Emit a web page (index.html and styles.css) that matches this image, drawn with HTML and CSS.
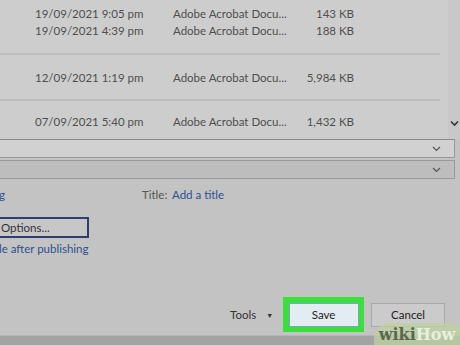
FILE: index.html
```html
<!DOCTYPE html>
<html lang="en">
  <head>
    <meta charset="UTF-8" />
    <title>Save As</title>
    <link rel="stylesheet" href="styles.css">
  </head>
  <body>
    <div class="dialog">
      <div class="list">
        <div class="files">
          <div class="group first">
            <div class="row"><span class="date">19/09/2021 9:05 pm</span><span class="type">Adobe Acrobat Docu...</span><span class="size">143 KB</span></div>
            <div class="row"><span class="date">19/09/2021 4:39 pm</span><span class="type">Adobe Acrobat Docu...</span><span class="size">188 KB</span></div>
          </div>
          <div class="group">
            <div class="row"><span class="date">12/09/2021 1:19 pm</span><span class="type">Adobe Acrobat Docu...</span><span class="size">5,984 KB</span></div>
          </div>
          <div class="group last">
            <div class="row"><span class="date">07/09/2021 5:40 pm</span><span class="type">Adobe Acrobat Docu...</span><span class="size">1,432 KB</span></div>
          </div>
        </div>
        <div class="scrollbar">
          <svg width="9" height="7" viewBox="0 0 9 7"><path d="M1 1.5 L4.5 5 L8 1.5" fill="none" stroke="#333" stroke-width="1.6"/></svg>
        </div>
      </div>

      <div class="select light">
        <svg width="9" height="6" viewBox="0 0 9 6"><path d="M1 1 L4.5 4.5 L8 1" fill="none" stroke="#555" stroke-width="1.2"/></svg>
      </div>
      <div class="select dark">
        <svg width="9" height="6" viewBox="0 0 9 6"><path d="M1 1 L4.5 4.5 L8 1" fill="none" stroke="#555" stroke-width="1.2"/></svg>
      </div>

      <div class="meta">
        <div class="meta-row">
          <span class="link cut">g</span>
          <span class="label">Title:</span>
          <span class="link">Add a title</span>
        </div>
        <button class="options">Options...</button>
        <span class="link cut after">le after publishing</span>
      </div>

      <div class="actions">
        <span class="tools">Tools</span>
        <span class="caret">&#9660;</span>
        <div class="highlight"><button class="btn save">Save</button></div>
        <button class="btn cancel">Cancel</button>
      </div>
      <div class="taskbar"></div>
      <div class="watermark"><span class="wiki">wiki</span><span class="how">How</span></div>
    </div>
  </body>
</html>
```

FILE: styles.css
```css
body {
  margin: 0;
  width: 460px;
  height: 345px;
  overflow: hidden;
  font-family: "Lato", "Noto Sans", sans-serif;
  font-size: 11.5px;
  color: #4f4f4f;
  background: #c3c3c3;
}

.dialog {
  position: relative;
  height: 345px;
  display: flex;
  flex-direction: column;
}

.list {
  display: flex;
  height: 139px;
  background: #cdcdcd;
  overflow: hidden;
}

.files {
  width: 448px;
}

.group {
  height: 46px;
  box-sizing: border-box;
  border-bottom: 2px solid #bdbdbd;
  width: 440px;
  display: flex;
  flex-direction: column;
  justify-content: center;
}

.group.first {
  height: 55px;
  justify-content: flex-start;
  padding-top: 5px;
}

.group.last {
  border-bottom: none;
  height: 38px;
  justify-content: flex-start;
  padding-top: 12px;
}

.row {
  display: flex;
  height: 17px;
  align-items: center;
}

.date {
  margin-left: 35px;
  width: 138px;
}

.type {
  width: 120px;
}

.size {
  width: 61px;
  text-align: right;
}

.scrollbar {
  width: 12px;
  background: #c8c8c8;
  display: flex;
  align-items: flex-end;
  justify-content: center;
  padding-bottom: 12px;
  box-sizing: border-box;
}

.select {
  width: 455px;
  height: 19px;
  box-sizing: border-box;
  border: 1px solid #9a9a9a;
  border-left: none;
  display: flex;
  align-items: center;
  justify-content: flex-end;
  padding-right: 13px;
}

.select.light {
  background: #d1d1d1;
  border-top-color: #8a8a8a;
}

.select.dark {
  margin-top: 2px;
  background: #bdbdbd;
}

.meta {
  padding-top: 6px;
  display: flex;
  flex-direction: column;
  align-items: flex-start;
}

.meta-row {
  display: flex;
  height: 18px;
  align-items: center;
  width: 100%;
}

.link {
  color: #2f4f8f;
}

.cut {
  margin-left: -1px;
}

.label {
  margin-left: 137px;
  width: 30px;
  color: #555;
}

.options {
  margin-top: 14px;
  margin-left: -8px;
  width: 97px;
  height: 21px;
  box-sizing: border-box;
  border: 2px solid #2d3f6e;
  background: #c7c7c7;
  font: inherit;
  color: #333;
  text-align: left;
  padding: 0 0 0 7px;
}

.after {
  margin-top: 4px;
}

.actions {
  margin-top: auto;
  display: flex;
  align-items: center;
  height: 35px;
  margin-bottom: 3px;
}

.tools {
  margin-left: 230px;
  color: #333;
}

.caret {
  margin-left: 10px;
  font-size: 7px;
  color: #333;
}

.highlight {
  margin-left: 10px;
  width: 81px;
  height: 35px;
  box-sizing: border-box;
  background: #3ae03a;
  display: flex;
  align-items: center;
  justify-content: center;
}

.btn {
  font: inherit;
  color: #222;
  height: 24px;
  box-sizing: border-box;
  border: 1px solid #9e9e9e;
  padding: 0;
}

.save {
  width: 70px;
  background: #e3ecf3;
  border-color: #7fa2c8;
}

.cancel {
  margin-left: 7px;
  width: 74px;
  background: #cbcbcb;
  border-color: #a9a9a9;
}

.taskbar {
  height: 10px;
  box-sizing: border-box;
  background: #a3a3a3;
  border-top: 1px solid #b5b5b5;
}

.watermark {
  position: absolute;
  right: 0;
  bottom: 0;
  width: 86px;
  padding: 2px 0 1px 0;
  text-align: center;
  border-radius: 16px 0 0 0;
  background: rgba(190, 210, 160, 0.75);
  font-family: "DejaVu Serif", serif;
  font-weight: bold;
  font-size: 16px;
  line-height: 19px;
}

.wiki {
  color: #58684c;
}

.how {
  color: #e8efdf;
}
```
